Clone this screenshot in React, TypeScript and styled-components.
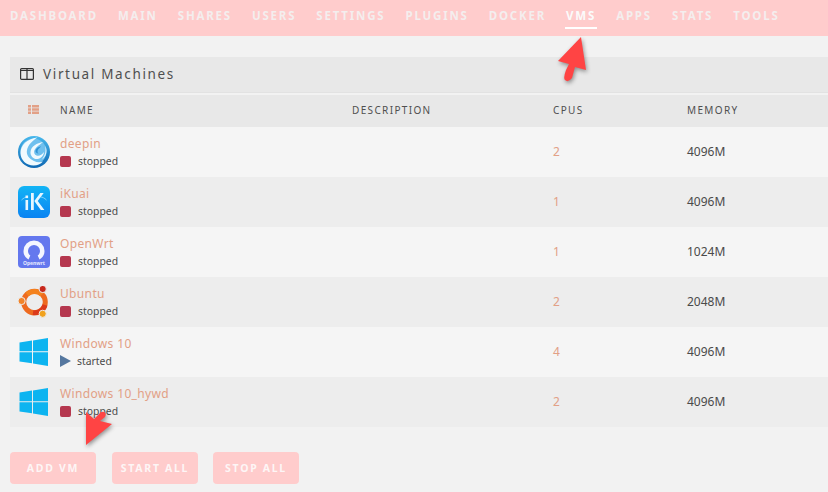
import React from "react";
import styled, { createGlobalStyle } from "styled-components";

const Global = createGlobalStyle`
  html, body { margin: 0; padding: 0; background: #f2f2f2; }
  body { font-family: "Noto Sans", "Open Sans", sans-serif; overflow: hidden; }
`;
const Page = styled.div`position: relative; width: 828px; height: 492px; overflow: hidden;`;
const Nav = styled.nav`
  height: 36px; background: #ffcccc; display: flex; align-items: flex-start; padding-left: 10px; gap: 20px;
`;
const NavItem = styled.div<{ $active?: boolean }>`
  height: 27px; line-height: 31px; padding: 0 1px; margin: 0 -1px; font-size: 11.5px; font-weight: 700; letter-spacing: 1.8px;
  color: ${p => (p.$active ? "#fbfbfb" : "#f4eeee")};
  border-bottom: 2px solid ${p => (p.$active ? "#ffffff" : "transparent")};
`;
const Main = styled.main`padding: 21px 0 0 10px;`;
const TitleBar = styled.div`
  height: 36px; background: #e8e8e8; border-bottom: 1px solid #e2e2e2; display: flex; align-items: center; padding: 0 0 1px 10px; gap: 9px; box-sizing: border-box;
  font-size: 13.5px; letter-spacing: 1.65px; color: #4f4f4f;
`;
const Grid = "grid-template-columns: 50px 292px 201px 134px 1fr;";
const Header = styled.div`
  margin-top: 2px; height: 32px; padding-bottom: 3px; background: #e8e8e8; display: grid; ${Grid} align-items: center;
  font-size: 10px; letter-spacing: 1.35px; color: #4f4f4f; box-sizing: border-box;
`;
const HeaderIcon = styled.div`display: flex; padding-left: 18px;`;
const Row = styled.div<{ $alt: boolean }>`
  height: 50px; display: grid; ${Grid} align-items: center; background: ${p => (p.$alt ? "#ededed" : "#f5f5f5")};
`;
const IconCell = styled.div`display: flex; padding-left: 8px; align-items: center;`;
const NameCell = styled.div`display: flex; flex-direction: column; gap: 1px; padding-top: 1px;`;
const VmName = styled.div`font-size: 12px; line-height: 16px; letter-spacing: .35px; color: #e2a086;`;
const State = styled.div`display: flex; align-items: center; height: 16px; font-size: 10.4px; color: #4a4a4a; gap: 7px;`;
const Stop = styled.span`width: 11px; height: 11px; border-radius: 2px; background: #b5384f;`;
const Play = styled.span`
  width: 0; height: 0; border-left: 11px solid #55779f; border-top: 6px solid transparent; border-bottom: 6px solid transparent; margin-right: -1px;
`;
const Cpu = styled.div`font-size: 12px; color: #e2a086; margin-bottom: 1px;`;
const Mem = styled.div`font-size: 12px; color: #4a4a4a; margin-bottom: 1px;`;
const Buttons = styled.div`display: flex; margin-top: 25px;`;
const Btn = styled.div<{ $gap: number }>`
  width: 86px; height: 32px; margin-right: ${p => p.$gap}px; border-radius: 4px; background: #ffcccc; color: #fdf6f6;
  display: flex; align-items: center; justify-content: center;
  font-size: 10.5px; font-weight: 700; letter-spacing: 1.7px;
`;
const Arrow = styled.svg<{ $x: number; $y: number }>`
  position: absolute; left: ${p => p.$x}px; top: ${p => p.$y}px; overflow: visible; filter: drop-shadow(1px 2px 2px rgba(0,0,0,.4));
`;
const LogoLabel = styled.text`font-family: "Noto Sans", sans-serif; font-size: 5px; font-weight: 700; fill: #e4e8ff;`;

const Deepin = () => (
  <svg width="32" height="32" viewBox="0 0 32 32">
    <defs><linearGradient id="dg" x1="0" y1="0" x2="0" y2="1"><stop offset="0" stopColor="#47b8ec" /><stop offset="1" stopColor="#0f68b3" /></linearGradient></defs>
    <circle cx="16" cy="16" r="16" fill="url(#dg)" />
    <circle cx="15.500" cy="15.500" r="13" fill="#6fc0ee" />
    <path d="M19 1.500C9 3 2.500 9 2.500 17c0 7 6 12.500 13 12.500 4 0 7-1.500 9.500-4-3 1-6 1-9-.5-5-2.500-8-6-7-11 1-5 5-9 10.500-12.500z" fill="#f1fafe" />
    <path d="M25 6c-6 1-12 4-12.500 10-.3 4 3 7.500 7 7 3.500-.5 6-3 6.500-7-2 3-5 4.500-7.500 3.500-2-.8-3-3-2-5.500C18 11 22 8.500 25 6z" fill="#f1fafe" />
    <path d="M27 9.500c2 3 2 7 .5 10-.8 1.500-2 3-3.500 4 2-3 3.500-6 3.500-9 0-2 0-3.500-.5-5z" fill="#e4f4fc" />
    <path d="M19 12c1.500-1 3-1.500 4-1.500-1.500 1.500-3.500 3-3.500 5 0 1 .5 1.500 1 2-1.500 0-3-1-3-2.500 0-1 .5-2 1.500-3z" fill="#2f92d6" />
  </svg>
);
const IKuai = () => (
  <svg width="32" height="32" viewBox="0 0 32 32">
    <defs><linearGradient id="ik" x1="0" y1="0" x2="0" y2="1"><stop offset="0" stopColor="#12b4f5" /><stop offset="1" stopColor="#0a83f2" /></linearGradient></defs>
    <rect width="32" height="32" rx="6" fill="url(#ik)" />
    <path d="M3.500 14c2-2 4-3 6-3M28.500 14c-2-2-4-3-6-3" fill="none" stroke="#7fd2fa" strokeWidth="1" />
    <rect x="7.500" y="14" width="2.600" height="10" fill="#e6f6ff" />
    <rect x="7.500" y="9.500" width="2.600" height="2.600" fill="#e6f6ff" />
    <path d="M13 7h2.800v17H13zM16.300 15l6-8h3.400l-6 8 6.700 9h-3.600z" fill="#e6f6ff" />
  </svg>
);
const OpenWrt = () => (
  <svg width="32" height="32" viewBox="0 0 32 32">
    <rect width="32" height="32" rx="4" fill="#6478ee" />
    <path d="M10.500 23.500C7 21.500 5.500 18.500 5.500 15a10.500 10.500 0 0 1 21 0c0 3.500-1.500 6.500-5 8.500l-1.800-4c1.500-1 2.300-2.600 2.300-4.500a6 6 0 0 0-12 0c0 1.900.8 3.500 2.300 4.500z" fill="#f4f6ff" />
    <LogoLabel x="16" y="29" textAnchor="middle">Openwrt</LogoLabel>
  </svg>
);
const Ubuntu = () => (
  <svg width="32" height="32" viewBox="0 0 32 32">
    <circle cx="16.500" cy="16" r="10.800" fill="none" stroke="#ee6a1f" strokeWidth="5" />
    <path d="M9 8.500 A10.800 10.800 0 0 1 24 8.500" fill="none" stroke="#f4821d" strokeWidth="5" />
    <path d="M27 19 A10.800 10.800 0 0 1 15 26.700" fill="none" stroke="#dc3a1a" strokeWidth="5" />
    <circle cx="3.600" cy="15" r="3.600" fill="#f1842a" stroke="#ededed" strokeWidth="1" />
    <circle cx="24.700" cy="3" r="3.600" fill="#c8281c" stroke="#ededed" strokeWidth="1" />
    <circle cx="24.700" cy="27.800" r="3.600" fill="#f1a21d" stroke="#ededed" strokeWidth="1" />
  </svg>
);
const Windows = () => (
  <svg width="32" height="32" viewBox="0 0 32 32">
    <path d="M1.500 6.500 14 4.600v10.700H1.500zM15 4.400 30 2v13.300H15zM1.500 16.300H14v11L1.500 25.500zM15 16.300h15V30l-15-2.400z" fill="#0db4f0" />
  </svg>
);

const vms = [
  { name: "deepin", cpu: 2, mem: "4096M", icon: <Deepin /> },
  { name: "iKuai", cpu: 1, mem: "4096M", icon: <IKuai /> },
  { name: "OpenWrt", cpu: 1, mem: "1024M", icon: <OpenWrt /> },
  { name: "Ubuntu", cpu: 2, mem: "2048M", icon: <Ubuntu /> },
  { name: "Windows 10", cpu: 4, mem: "4096M", icon: <Windows />, started: true },
  { name: "Windows 10_hywd", cpu: 2, mem: "4096M", icon: <Windows /> },
];
const tabs = ["DASHBOARD", "MAIN", "SHARES", "USERS", "SETTINGS", "PLUGINS", "DOCKER", "VMS", "APPS", "STATS", "TOOLS"];

const arrow = "M0 24 L23 0 L28 33 L17 30 L14 41 Q10 46 7 43 Q5 41 8 33 L11 27 Z";

export default function App() {
  return (
    <Page>
      <Global />
      <Nav>
        {tabs.map(t => <NavItem key={t} $active={t === "VMS"}>{t}</NavItem>)}
      </Nav>
      <Main>
        <TitleBar>
          <svg width="14" height="12" viewBox="0 0 14 12" fill="none" stroke="#333" strokeWidth="1.200">
            <rect x=".6" y=".6" width="12.800" height="10.800" rx="1" /><path d="M7 .6v10.800M.6 2.500h12.800" />
          </svg>
          Virtual Machines
        </TitleBar>
        <Header>
          <HeaderIcon>
            <svg width="11" height="9" viewBox="0 0 11 9" fill="#e2a086">
              <path d="M0 0h3v2.500H0zM4 0h7v2.500H4zM0 3.300h3v2.500H0zM4 3.300h7v2.500H4zM0 6.500h3V9H0zM4 6.500h7V9H4z" />
            </svg>
          </HeaderIcon>
          <div>NAME</div><div>DESCRIPTION</div><div>CPUS</div><div>MEMORY</div>
        </Header>
        {vms.map((v, i) => (
          <Row key={v.name} $alt={i % 2 === 1}>
            <IconCell>{v.icon}</IconCell>
            <NameCell>
              <VmName>{v.name}</VmName>
              <State>{v.started ? <Play /> : <Stop />}{v.started ? "started" : "stopped"}</State>
            </NameCell>
            <div />
            <Cpu>{v.cpu}</Cpu>
            <Mem>{v.mem}</Mem>
          </Row>
        ))}
        <Buttons>
          <Btn $gap={16}>ADD VM</Btn>
          <Btn $gap={15}>START ALL</Btn>
          <Btn $gap={0}>STOP ALL</Btn>
        </Buttons>
      </Main>
      <Arrow $x={558} $y={37} width="28" height="44" viewBox="0 0 28 44"><path d={arrow} fill="#ff4444" /></Arrow>
      <Arrow $x={84} $y={412} width="28" height="34" viewBox="0 0 28 34">
        <path d="M1 0 L1 33 L27 12 L15 9 L20 5 Q22 1 19 0 Q16 -1 14 2 L9 7 Z" transform="translate(1 0)" fill="#ff4444" />
      </Arrow>
    </Page>
  );
}
